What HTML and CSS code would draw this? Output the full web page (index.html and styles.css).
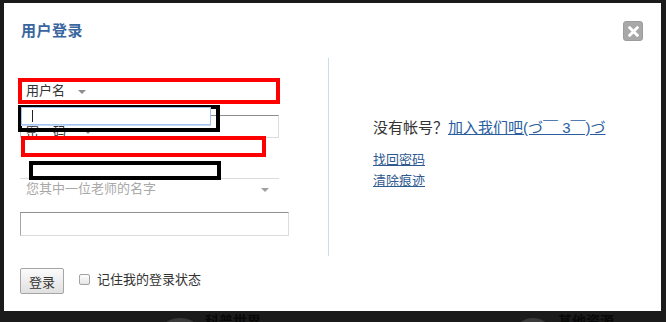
FILE: index.html
```html
<!DOCTYPE html>
<html lang="zh-CN">
<head>
<meta charset="utf-8">
<title>用户登录</title>
<link rel="stylesheet" href="styles.css">
</head>
<body>
<div class="modal">
  <div class="modal-head">
    <h1 class="title">用户登录</h1>
    <button class="close" type="button" aria-label="关闭">
      <svg width="11" height="11" viewBox="0 0 10 10"><path d="M1.6 1.6 L8.4 8.4 M8.4 1.6 L1.6 8.4" stroke="#fff" stroke-width="2.6" stroke-linecap="square" fill="none"/></svg>
    </button>
  </div>
  <div class="modal-body">
    <div class="col-left">
      <div class="select-user">用户名<span class="caret"></span></div>
      <div class="input-user"><span class="cursor"></span></div>
      <div class="pw-box"><span class="pw-a">密</span>码<span class="caret caret-pw"></span></div>
      <div class="select-q">您其中一位老师的名字<span class="caret caret-q"></span></div>
      <div class="input-answer"></div>
    </div>
    <div class="divider"></div>
    <div class="col-right">
      <p class="signup">没有帐号？<a class="join" href="#">加入我们吧(づ￣ 3￣)づ</a></p>
      <a class="link link-first" href="#">找回密码</a>
      <a class="link" href="#">清除痕迹</a>
    </div>
  </div>
  <div class="modal-foot">
    <button class="btn" type="button">登录</button>
    <label class="remember"><span class="checkbox"></span>记住我的登录状态</label>
  </div>
  <div class="mark red r1"></div>
  <div class="mark black b1"></div>
  <div class="mark red r2"></div>
  <div class="mark black b2"></div>
</div>
<div class="strip">
  <div class="group"><span class="blob"></span><span class="strip-text">科普世界</span></div>
  <div class="group"><span class="blob blob2"></span><span class="strip-text t2">其他资源</span></div>
</div>
</body>
</html>
```
FILE: styles.css
```css
html, body {
  margin: 0;
  padding: 0;
}
body {
  background: #1b1b1b;
  font-family: "Liberation Sans", "Noto Sans CJK SC", sans-serif;
  width: 666px;
  height: 322px;
  overflow: hidden;
}
.modal {
  position: relative;
  margin: 3px 0 0 4px;
  width: 657px;
  height: 308px;
  background: #fff;
}
.modal-head {
  display: flex;
  justify-content: space-between;
  align-items: flex-start;
  padding: 18px 18px 0 17px;
}
.title {
  margin: 0;
  font-size: 15px;
  line-height: 20px;
  font-weight: bold;
  letter-spacing: 0.5px;
  color: #3a66a0;
}
.close {
  width: 20px;
  height: 20px;
  padding: 0;
  border: 1px solid #9c9c9c;
  border-radius: 3px;
  background: #a8a8a8;
  display: flex;
  align-items: center;
  justify-content: center;
}
.modal-body {
  display: flex;
  margin-top: 17px;
  padding-left: 16px;
  height: 198px;
}
.col-left {
  width: 308px;
  padding-top: 22px;
  display: flex;
  flex-direction: column;
  align-items: flex-start;
}
.caret {
  display: inline-block;
  width: 0;
  height: 0;
  border-left: 4px solid transparent;
  border-right: 4px solid transparent;
  border-top: 4px solid #8e8e8e;
}
.select-user {
  height: 21px;
  line-height: 21px;
  padding-left: 6px;
  font-size: 13px;
  color: #333;
  display: flex;
  align-items: center;
}
.select-user .caret {
  margin-left: 13px;
  margin-top: 2px;
}
.input-user {
  position: relative;
  z-index: 1;
  margin-top: 6px;
  margin-left: 1px;
  width: 190px;
  height: 18px;
  box-sizing: border-box;
  border: 1px solid #a3c3f3;
  box-shadow: 0 1px 0 #c4d8f8;
  background: #fff;
  padding-left: 10px;
  display: flex;
  align-items: center;
}
.cursor {
  width: 1px;
  height: 12px;
  background: #222;
}
.pw-box {
  margin-top: -10px;
  width: 259px;
  height: 23px;
  box-sizing: border-box;
  border: 1px solid;
  border-color: #8c8c8c #dcdcdc #dcdcdc #bdbdbd;
  padding: 10px 0 0 5px;
  font-size: 13px;
  line-height: 18px;
  color: #333;
  display: flex;
  align-items: center;
}
.pw-a {
  margin-right: 14px;
}
.caret-pw {
  margin-left: 18px;
}
.select-q {
  margin-top: 40px;
  width: 259px;
  height: 20px;
  box-sizing: border-box;
  border-top: 1px solid #dcdcdc;
  padding-left: 6px;
  font-size: 13px;
  line-height: 19px;
  color: #a8a8a8;
  display: flex;
  align-items: center;
}
.caret-q {
  margin-left: auto;
  margin-right: 10px;
  border-top-color: #a0a0a0;
  margin-top: 3px;
}
.input-answer {
  margin-top: 14px;
  width: 269px;
  height: 24px;
  box-sizing: border-box;
  border: 1px solid;
  border-color: #8f8f8f #dcdcdc #dcdcdc #a4a4a4;
}
.divider {
  width: 1px;
  background: #cfdbe8;
}
.col-right {
  padding-left: 44px;
  padding-top: 60px;
}
.signup {
  margin: 0;
  font-size: 15px;
  line-height: 20px;
  color: #333;
}
.join {
  color: #2a5d9f;
  text-decoration: underline;
}
.link {
  display: block;
  font-size: 13px;
  line-height: 21px;
  color: #2f5a8f;
  text-decoration: underline;
}
.link-first {
  margin-top: 11px;
}
.modal-foot {
  display: flex;
  align-items: center;
  margin-top: 12px;
  padding-left: 16px;
}
.btn {
  width: 44px;
  height: 26px;
  padding: 0;
  border: 1px solid #a5a5a5;
  border-radius: 2px;
  background: linear-gradient(#fbfbfb, #e0e0e0);
  font-family: "Liberation Sans", "Noto Sans CJK SC", sans-serif;
  font-size: 13px;
  color: #333;
}
.remember {
  display: flex;
  align-items: center;
  margin-left: 15px;
  margin-top: -3px;
  font-size: 13px;
  line-height: 18px;
  color: #333;
}
.checkbox {
  width: 11px;
  height: 11px;
  box-sizing: border-box;
  border: 1px solid #a3a3a3;
  border-radius: 2px;
  background: linear-gradient(#fdfdfd, #e6e6e6);
  margin-right: 7px;
}
.mark {
  position: absolute;
  box-sizing: border-box;
  border: 4px solid;
}
.red { border-color: #ff0000; }
.black { border-color: #000; }
.r1 { left: 14px; top: 75px; width: 262px; height: 26px; }
.b1 { left: 14px; top: 102px; width: 202px; height: 27px; }
.r2 { left: 17px; top: 133px; width: 245px; height: 21px; }
.b2 { left: 25px; top: 158px; width: 192px; height: 19px; }
.strip {
  display: flex;
  height: 11px;
  overflow: hidden;
  padding-left: 163px;
}
.group {
  display: flex;
  width: 355px;
  flex: none;
}
.blob {
  width: 34px;
  height: 20px;
  margin-top: 7px;
  border-radius: 50%;
  background: #3a3a3a;
  flex: none;
}
.blob2 {
  width: 30px;
}
.strip-text {
  margin-left: 8px;
  margin-top: 1px;
  font-size: 14px;
  line-height: 18px;
  font-weight: bold;
  color: #070707;
}
.t2 {
  margin-left: 10px;
}
```
